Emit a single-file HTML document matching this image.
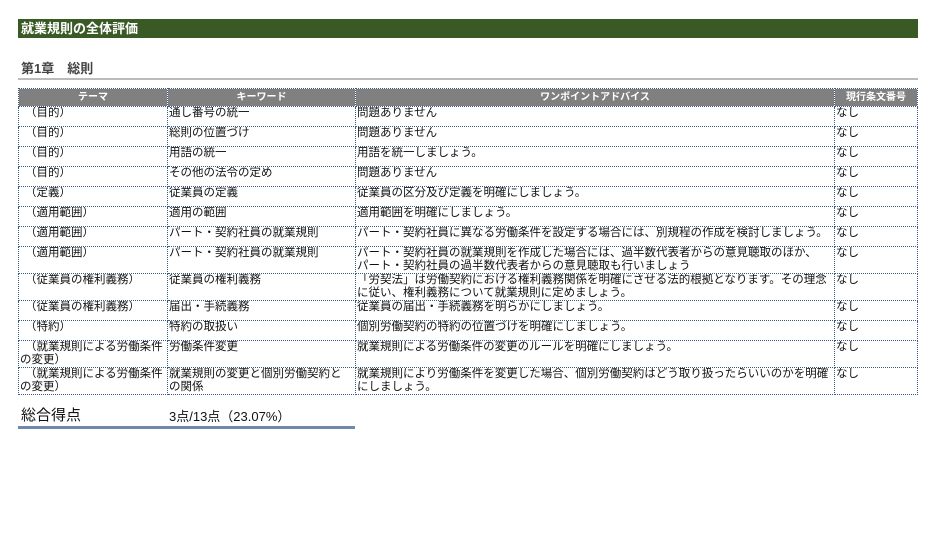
<!DOCTYPE html>
<html><head><meta charset="utf-8"><style>
body{margin:0;background:#fff;font-family:"Liberation Sans","Noto Sans CJK JP",sans-serif;color:#111;}
.bar{position:absolute;left:18px;top:19px;width:900px;height:19px;background:#3a5a25;color:#fff;font-weight:bold;font-size:13px;line-height:19px;text-indent:3px;}
.h2{position:absolute;left:21px;top:58px;font-size:13px;font-weight:bold;color:#444;}
.hr{position:absolute;left:18px;top:78px;width:900px;height:2px;background:#bbb;}
table{position:absolute;left:18px;top:88px;border-collapse:collapse;table-layout:fixed;font-size:11.5px;}
td,th{border:1px dotted #3a5a8a;padding:0 1px;vertical-align:top;line-height:13px;white-space:nowrap;overflow:hidden;}
th{background:#808080;color:#fff;font-size:10px;height:17px;line-height:12px;vertical-align:middle;}
td.k{padding-left:6px}
.tot{position:absolute;left:21px;top:404px;font-size:15px;}
.tv{position:absolute;left:169px;top:406px;font-size:13px;}
.line{position:absolute;left:18px;top:426px;width:337px;height:3px;background:#6f88ab;}
</style></head><body>
<div class="bar">就業規則の全体評価</div>
<div class="h2">第1章　総則</div>
<div class="hr"></div>
<table>
<colgroup><col style="width:149px"><col style="width:188px"><col style="width:479px"><col style="width:83px"></colgroup>
<tr><th>テーマ</th><th>キーワード</th><th>ワンポイントアドバイス</th><th>現行条文番号</th></tr>
<tr style="height:20px"><td class="k">（目的）</td><td>通し番号の統一</td><td>問題ありません</td><td>なし</td></tr>
<tr style="height:20px"><td class="k">（目的）</td><td>総則の位置づけ</td><td>問題ありません</td><td>なし</td></tr>
<tr style="height:20px"><td class="k">（目的）</td><td>用語の統一</td><td>用語を統一しましょう。</td><td>なし</td></tr>
<tr style="height:20px"><td class="k">（目的）</td><td>その他の法令の定め</td><td>問題ありません</td><td>なし</td></tr>
<tr style="height:20px"><td class="k">（定義）</td><td>従業員の定義</td><td>従業員の区分及び定義を明確にしましょう。</td><td>なし</td></tr>
<tr style="height:20px"><td class="k">（適用範囲）</td><td>適用の範囲</td><td>適用範囲を明確にしましょう。</td><td>なし</td></tr>
<tr style="height:20px"><td class="k">（適用範囲）</td><td>パート・契約社員の就業規則</td><td>パート・契約社員に異なる労働条件を設定する場合には、別規程の作成を検討しましょう。</td><td>なし</td></tr>
<tr style="height:27px"><td class="k">（適用範囲）</td><td>パート・契約社員の就業規則</td><td>パート・契約社員の就業規則を作成した場合には、過半数代表者からの意見聴取のほか、<br>パート・契約社員の過半数代表者からの意見聴取も行いましょう</td><td>なし</td></tr>
<tr style="height:27px"><td class="k">（従業員の権利義務）</td><td>従業員の権利義務</td><td>「労契法」は労働契約における権利義務関係を明確にさせる法的根拠となります。その理念<br>に従い、権利義務について就業規則に定めましょう。</td><td>なし</td></tr>
<tr style="height:20px"><td class="k">（従業員の権利義務）</td><td>届出・手続義務</td><td>従業員の届出・手続義務を明らかにしましょう。</td><td>なし</td></tr>
<tr style="height:20px"><td class="k">（特約）</td><td>特約の取扱い</td><td>個別労働契約の特約の位置づけを明確にしましょう。</td><td>なし</td></tr>
<tr style="height:27px"><td class="k">（就業規則による労働条件<br><span style="margin-left:-5px">の変更）</span></td><td>労働条件変更</td><td>就業規則による労働条件の変更のルールを明確にしましょう。</td><td>なし</td></tr>
<tr style="height:27px"><td class="k">（就業規則による労働条件<br><span style="margin-left:-5px">の変更）</span></td><td>就業規則の変更と個別労働契約と<br>の関係</td><td>就業規則により労働条件を変更した場合、個別労働契約はどう取り扱ったらいいのかを明確<br>にしましょう。</td><td>なし</td></tr>
</table>
<div class="tot">総合得点</div>
<div class="tv">3点/13点（23.07%）</div>
<div class="line"></div>
</body></html>
